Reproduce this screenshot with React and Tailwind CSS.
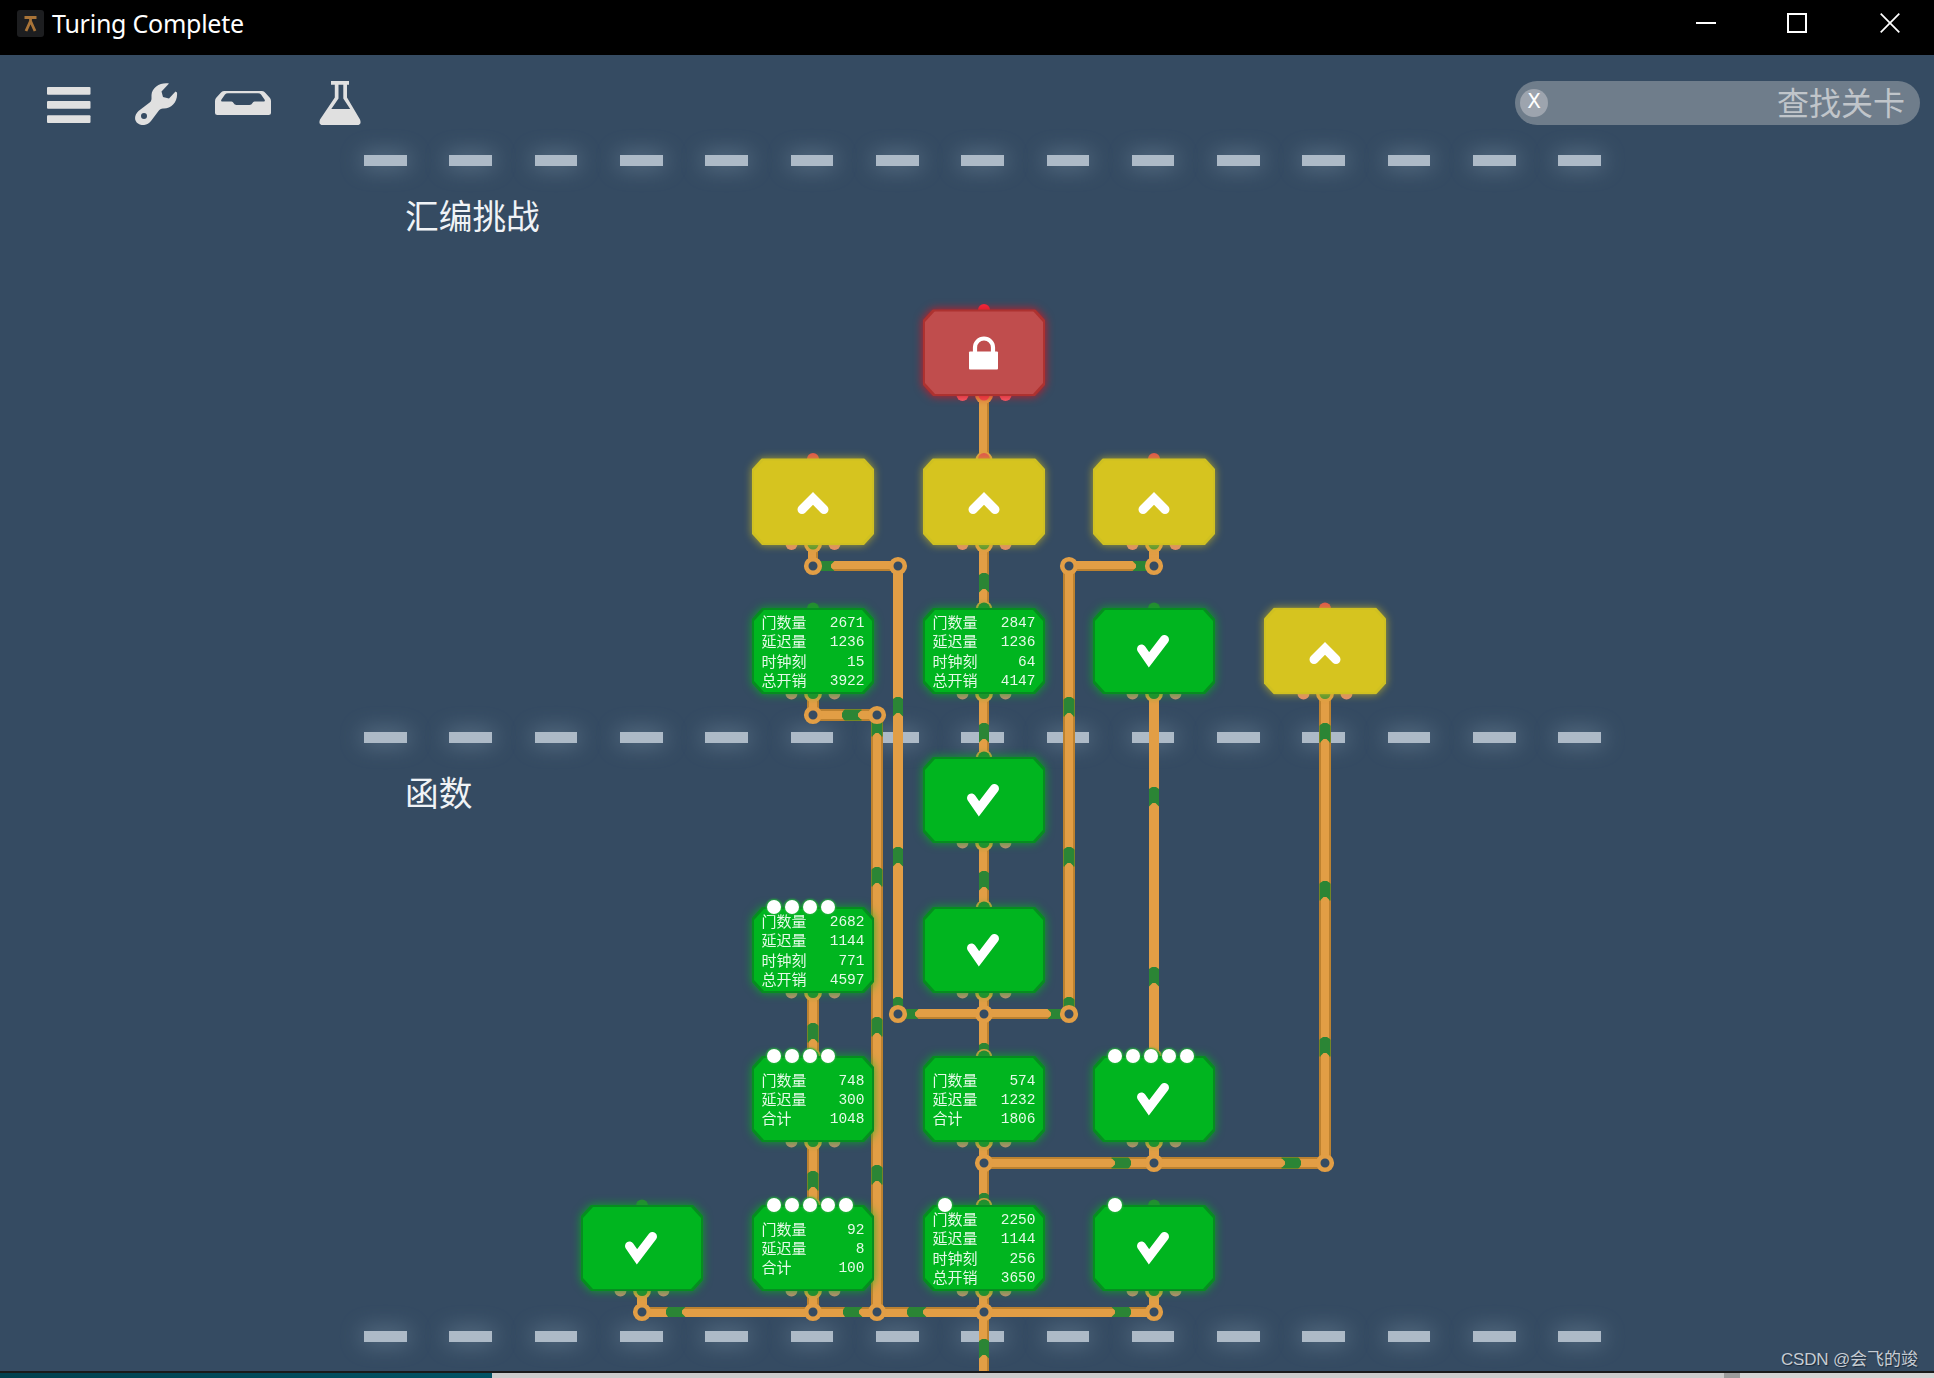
import React from 'react'

const COLS = [642, 813, 984, 1154, 1325]
const ROWS = [352.5, 501.5, 651, 800, 950, 1099, 1248]

// every level on the map, placed by column / row
const levels = [
  { col: 2, row: 0, kind: 'locked' },
  { col: 1, row: 1, kind: 'open' },
  { col: 2, row: 1, kind: 'open', wiredTop: true },
  { col: 3, row: 1, kind: 'open' },
  { col: 1, row: 2, kind: 'done', stats: [['门数量', 2671], ['延迟量', 1236], ['时钟刻', 15], ['总开销', 3922]] },
  { col: 2, row: 2, kind: 'done', wiredTop: true, stats: [['门数量', 2847], ['延迟量', 1236], ['时钟刻', 64], ['总开销', 4147]] },
  { col: 3, row: 2, kind: 'done' },
  { col: 4, row: 2, kind: 'open' },
  { col: 2, row: 3, kind: 'done', wiredTop: true },
  { col: 1, row: 4, kind: 'done', dots: 4, stats: [['门数量', 2682], ['延迟量', 1144], ['时钟刻', 771], ['总开销', 4597]] },
  { col: 2, row: 4, kind: 'done', wiredTop: true },
  { col: 1, row: 5, kind: 'done', wiredTop: true, dots: 4, stats: [['门数量', 748], ['延迟量', 300], ['合计', 1048]] },
  { col: 2, row: 5, kind: 'done', wiredTop: true, stats: [['门数量', 574], ['延迟量', 1232], ['合计', 1806]] },
  { col: 3, row: 5, kind: 'done', wiredTop: true, dots: 5 },
  { col: 0, row: 6, kind: 'done' },
  { col: 1, row: 6, kind: 'done', wiredTop: true, dots: 5, stats: [['门数量', 92], ['延迟量', 8], ['合计', 100]] },
  { col: 2, row: 6, kind: 'done', wiredTop: true, dots: 1, stats: [['门数量', 2250], ['延迟量', 1144], ['时钟刻', 256], ['总开销', 3650]] },
  { col: 3, row: 6, kind: 'done', dots: 1 },
]

// [x, y1, y2, left edge, right edge]
const vWires = [
  [984, 394, 460, 0, 1], [984, 544, 608, 0, 1], [984, 692, 758, 0, 1], [984, 842, 908, 0, 1],
  [984, 992, 1056, 0, 1], [984, 1140, 1206, 0, 1], [984, 1290, 1371, 0, 1],
  [813, 544, 566, 0, 1], [1154, 544, 566, 0, 0],
  [898, 566, 1014, 0, 0], [1069, 566, 1014, 1, 1],
  [813, 692, 715, 1, 1], [877, 715, 1312, 1, 1],
  [813, 992, 1056, 1, 1], [813, 1140, 1206, 1, 1], [813, 1290, 1312, 1, 1],
  [1154, 692, 1056, 0, 0], [1154, 1140, 1163, 0, 0], [1154, 1290, 1312, 0, 0],
  [1325, 692, 1163, 1, 1], [642, 1290, 1312, 0, 0],
]

// [y, x1, x2, top edge, bottom edge]
const hWires = [
  [566, 813, 898, 0, 1], [566, 1069, 1154, 0, 1], [715, 813, 877, 1, 1],
  [1014, 898, 1069, 0, 1], [1163, 984, 1325, 1, 1], [1312, 642, 1154, 1, 0],
]

const joints = [
  [813, 566], [898, 566], [1069, 566], [1154, 566], [813, 715], [877, 715],
  [898, 1014], [984, 1014], [1069, 1014], [984, 1163], [1154, 1163], [1325, 1163],
  [642, 1312], [813, 1312], [877, 1312], [984, 1312], [1154, 1312],
]

// [x, y, rotation, wide wire], the tip of each pulse
const pulses = [
  [984, 573, 0], [984, 723, 0], [984, 871, 0], [984, 1043, 0], [984, 1193, 0], [984, 1339, 0],
  [898, 697, 0], [898, 847, 0], [898, 997, 0], [1069, 697, 0, 1], [1069, 847, 0, 1], [1069, 997, 0, 1],
  [1154, 787, 0], [1154, 967, 0], [1325, 723, 0, 1], [1325, 881, 0, 1], [1325, 1037, 0, 1],
  [877, 717, 0, 1], [877, 867, 0, 1], [877, 1017, 0, 1], [877, 1165, 0, 1], [813, 1023, 0, 1], [813, 1171, 0, 1],
  [815, 566, -90], [1152, 566, 90], [842, 715, -90, 1], [899, 1014, -90], [1067, 1014, 90],
  [1131, 1163, 90, 1], [1301, 1163, 90, 1], [666, 1312, -90], [843, 1312, -90], [907, 1312, -90], [1131, 1312, 90],
]

const portColors = {
  locked: { top: '#f4283c', bottom: '#f4606c', mid: '#f05050' },
  open: { top: '#e25050', bottom: '#e58a72', mid: '#4c9434' },
  done: { top: '#2b8535', bottom: '#c88a76', mid: '#2b8535' },
}

const nodeStyles = {
  locked: { size: 'h-[87px]', glow: 'drop-shadow-[0_0_5px_#d01822]', edge: 'bg-[#ad3230]', face: 'bg-[#c04d4d]' },
  open: { size: 'h-[87px]', glow: 'drop-shadow-[0_0_4px_#c8b822c8]', edge: 'bg-[#cfc022]', face: 'bg-[#d6c41f]' },
  done: { size: 'h-[86px]', glow: 'drop-shadow-[0_0_5px_#02b41fd0]', edge: 'bg-[#068d20]', face: 'bg-[#00b51f]' },
}

const chamfer = '[clip-path:polygon(10px_0,calc(100%-10px)_0,100%_11px,100%_calc(100%-11px),calc(100%-10px)_100%,10px_100%,0_calc(100%-11px),0_11px)]'

function Wires() {
  return (
    <svg className="absolute inset-0" width="1934" height="1371" viewBox="0 0 1934 1371">
      <g shapeRendering="crispEdges">
        {vWires.map(([x, y1, y2, l, r], i) => (
          <g key={i}>
            <rect x={x - 5 - (l && r ? 1 : 0)} y={y1} width={l && r ? 12 : 10} height={y2 - y1} fill={l || r ? '#bd8230' : '#e29e45'} />
            <rect x={x - 5 + (l ? 1 : 0)} y={y1} width={l || r ? 8 : 10} height={y2 - y1} fill="#e29e45" />
          </g>
        ))}
        {hWires.map(([y, x1, x2, t, b], i) => (
          <g key={i}>
            <rect x={x1} y={y - 5 - (t && b ? 1 : 0)} width={x2 - x1} height={t && b ? 12 : 10} fill="#bd8230" />
            <rect x={x1} y={y - 5 + (t && b ? 1 : t ? 2 : 0)} width={x2 - x1} height="8" fill="#e29e45" />
          </g>
        ))}
      </g>
      {pulses.map(([x, y, rot, wide], i) => (
        <g key={i} transform={`translate(${x} ${y}) rotate(${rot})`}>
          {wide && <path d="M-6 2.500H-4V19.500H-6ZM4 2.500H6V19.500H4Z" fill="#738626" />}
          <path d="M-5 2L-2 0H2L5 2V19.500L1.500 16H-1.500L-5 19.500Z" fill="#2b8535" />
        </g>
      ))}
      {joints.map(([x, y], i) => (
        <circle key={i} cx={x} cy={y} r="6.8" fill="#354b62" stroke="#e29e45" strokeWidth="4.6" />
      ))}
      {levels.map((l, i) => {
        const x = COLS[l.col]
        const top = ROWS[l.row] - 43
        const bottom = ROWS[l.row] + 43
        const c = portColors[l.kind]
        return (
          <g key={i}>
            {l.wiredTop && <circle cx={x} cy={top + 1.5} r="8.5" fill="#e29e45" />}
            <circle cx={x} cy={top + 0.5} r="6" fill={c.top} />
            <circle cx={x - 21.5} cy={bottom - 0.5} r="6" fill={c.bottom} />
            <circle cx={x + 21.5} cy={bottom - 0.5} r="6" fill={c.bottom} />
            <circle cx={x} cy={bottom - 0.5} r="9" fill="#e29e45" />
            <circle cx={x} cy={bottom - 0.5} r="5.5" fill={c.mid} />
          </g>
        )
      })}
    </svg>
  )
}

function NodeIcon({ kind }) {
  return (
    <svg width="40" height="40" viewBox="-20 -20 40 40" fill="none" stroke="#fff">
      {kind === 'done' && <path d="M-12.5 -2L-5 8.8L10.5 -11.5" strokeWidth="9" strokeLinecap="round" />}
      {kind === 'open' && <path d="M-11 8L0 -3.200L11 8" strokeWidth="9" strokeLinecap="round" />}
      {kind === 'locked' && (
        <>
          <path d="M-9 0V-5a9 9 0 0 1 18 0V0" strokeWidth="4.2" />
          <rect x="-15" y="-1" width="29" height="18" rx="1" fill="#fff" stroke="none" />
        </>
      )}
    </svg>
  )
}

function LevelNode({ level }) {
  const s = nodeStyles[level.kind]
  return (
    <div className={`absolute w-[122px] -translate-x-1/2 -translate-y-1/2 ${s.size}`} style={{ left: COLS[level.col], top: ROWS[level.row] }}>
      <div className={`h-full w-full ${s.glow}`}>
        <div className={`h-full w-full p-0.5 ${s.edge} ${chamfer}`}>
          <div className={`flex h-full w-full items-center justify-center ${s.face} ${chamfer}`}>
            {level.stats ? (
              <div className="-mt-px w-full px-[7.5px] text-[15px] leading-[19.2px] text-[#e4fae7]">
                {level.stats.map(([label, value]) => (
                  <div key={label} className="flex h-[19.2px] justify-between">
                    <span>{label}</span>
                    <span className="mt-0.5 font-['Liberation_Mono',monospace] text-[14.5px]">{value}</span>
                  </div>
                ))}
              </div>
            ) : (
              <NodeIcon kind={level.kind} />
            )}
          </div>
        </div>
      </div>
      {level.dots && (
        <div className="absolute -top-[7px] left-[15px] flex gap-1">
          {Array.from({ length: level.dots }, (_, i) => (
            <span key={i} className="h-3.5 w-3.5 rounded-full bg-white shadow-[0_0_2px_1px_#22b33a]" />
          ))}
        </div>
      )}
    </div>
  )
}

function Section({ title, className }) {
  return (
    <section className={className}>
      <div className="ml-[364px] flex gap-[42.67px]">
        {Array.from({ length: 15 }, (_, i) => (
          <span key={i} className="h-[11px] w-[42.67px] shrink-0 bg-[#adbac7] shadow-[0_0_22px_2px_#8fa5b878]" />
        ))}
      </div>
      {title && <h2 className="mt-[30px] ml-[405px] text-[33.7px] leading-[38px] font-normal text-[#f0f3f6]">{title}</h2>}
    </section>
  )
}

function TitleBar() {
  return (
    <header className="flex h-[55px] items-start bg-black text-white">
      <div className="mt-2.5 ml-[17px] flex h-[27px] w-[27px] items-center justify-center rounded-[3px] bg-[#1d1e20]">
        <svg width="15" height="19" viewBox="0 0 15 19" fill="none" stroke="#a97438">
          <path d="M1.5 3.5H13.5" strokeWidth="3" />
          <path d="M7.5 3V9M7.5 7L3 17M7.5 7L12 17" strokeWidth="2.8" />
        </svg>
      </div>
      <h1 className="mt-[5px] ml-2 font-['Noto_Sans',sans-serif] text-[25px] leading-9 tracking-[-0.25px] whitespace-nowrap">Turing Complete</h1>
      <div className="mt-[13px] mr-[34px] ml-auto flex gap-[71px]">
        <svg width="20" height="20"><path d="M0 10H20" stroke="#fff" strokeWidth="2" /></svg>
        <svg width="20" height="20"><path d="M1 1H19V19H1Z" fill="none" stroke="#fff" strokeWidth="2" /></svg>
        <svg width="20" height="20" className="ml-0.5"><path d="M.7 .7L19.3 19.3M19.3 .7L.7 19.3" stroke="#fff" strokeWidth="1.7" /></svg>
      </div>
    </header>
  )
}

function Toolbar() {
  return (
    <nav className="flex h-[99.5px] items-start pt-[26px] pr-3.5 pl-[47px]">
      <svg width="44" height="44" viewBox="0 0 44 44" fill="#e0e0e0">
        <rect y="6" width="43.5" height="7.7" rx="1" />
        <rect y="20" width="43.5" height="7.8" rx="1" />
        <rect y="34.2" width="43.5" height="7.8" rx="1" />
      </svg>
      <svg width="44" height="44" viewBox="0 0 44 44" fill="#e0e0e0" className="ml-11">
        <path fillRule="evenodd" d="M34 2.500C26 1 17 6 16.500 14V18C16.300 20 15.500 21 14 22L3.500 30C-1 34 -1 40 3 42.500C7 45.500 13 44 16 40L23.500 30C24.500 28.500 26 27.800 28 27.500C36 28 43 21 42 11.500L40.500 10.500L34 17.500L28 16L26.500 10.500ZM9 32a3 3 0 1 1 0 6a3 3 0 0 1 0 -6Z" />
      </svg>
      <svg width="56" height="44" viewBox="0 0 56 44" fill="#e0e0e0" className="ml-9">
        <path fillRule="evenodd" d="M9 10H47Q49 10 50.500 12L55 17Q56 18.500 56 20V31.500Q56 34 53.500 34H2.500Q0 34 0 31.500V20Q0 18.500 1 17L5.500 12Q7 10 9 10ZM13 12.200Q11 12.200 10 13.500L6.500 18.500Q5.500 20.500 7 20.500H16.500Q18 20.500 18.500 22Q19.500 24 21.500 24H34.500Q36.500 24 37.500 22Q38 20.500 39.500 20.500H49Q50.500 20.500 49.500 18.500L46 13.500Q45 12.200 43 12.200Z" />
      </svg>
      <svg width="42" height="44" viewBox="0 0 42 44" fill="#e0e0e0" className="ml-12">
        <path fillRule="evenodd" d="M12 0H30V3.800H28V16.500L41 38.500Q43 44 38 44H4Q-1 44 1 38.500L15.800 16.500V3.800H12ZM19.500 3.800V17.500L12.300 28H31.200L24.300 17.500V3.800Z" />
      </svg>
      <div className="ml-auto flex h-11 w-[405px] items-center rounded-full bg-[#6f7d8b] pr-[15px] pl-[5px]">
        <span className="flex h-7 w-7 items-center justify-center rounded-full bg-[#9da4ae] font-['Liberation_Mono',monospace] text-[22px] leading-none text-white">X</span>
        <span className="-mt-[5px] ml-auto text-[32px] leading-[44px] font-normal text-[#c0c5ca]">查找关卡</span>
      </div>
    </nav>
  )
}

export default function App() {
  return (
    <div className="relative flex h-[1378px] w-[1934px] flex-col overflow-hidden bg-[#354b62] font-['Noto_Sans_CJK_SC',sans-serif]">
      <TitleBar />
      <main className="h-[1316px] overflow-hidden">
        <Toolbar />
        <Section title="汇编挑战" className="h-[577px]" />
        <Section title="函数" className="h-[599.5px]" />
        <Section className="h-10" />
      </main>
      <footer className="flex h-[7px] border-t-2 border-[#1a1a1a]">
        <div className="w-[492px] bg-gradient-to-r from-[#02404e] to-[#025264]" />
        <div className="w-[1232px] bg-[#cbcbcb]" />
        <div className="w-4 bg-[#9c9c9c]" />
        <div className="grow bg-[#d4d4d4]" />
      </footer>

      {/* level map lies over the sections */}
      <div className="absolute inset-x-0 top-0 h-[1371px] overflow-hidden">
        <Wires />
        {levels.map((level) => (
          <LevelNode key={`${level.col}-${level.row}`} level={level} />
        ))}
      </div>
      <span className="absolute right-4 bottom-1.5 text-[17px] leading-6 whitespace-nowrap text-[#c6ccd3] [text-shadow:1px_1px_1px_#1c2a3a]">
        <span className="font-['Liberation_Sans',sans-serif] text-[17px] tracking-[-0.2px]">CSDN @</span>会飞的竣
      </span>
    </div>
  )
}
